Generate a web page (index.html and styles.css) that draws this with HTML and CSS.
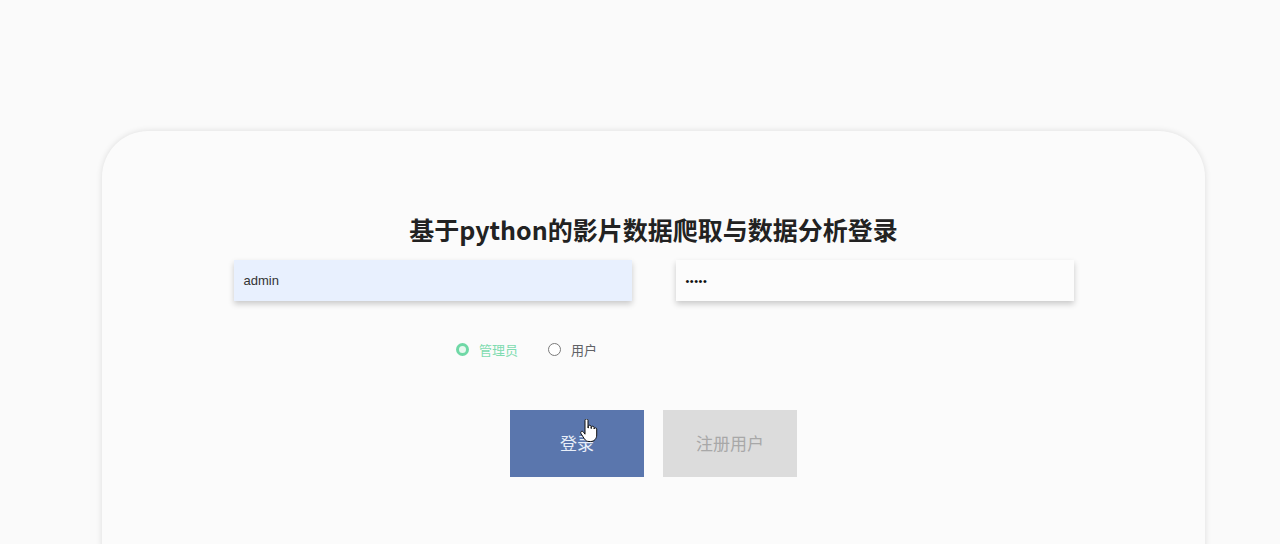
FILE: index.html
```html
<!DOCTYPE html>
<html lang="zh-CN">
<head>
<meta charset="utf-8">
<title>登录</title>
<link rel="stylesheet" href="styles.css">
</head>
<body>
<div class="card">
  <h1 class="title">基于python的影片数据爬取与数据分析登录</h1>
  <div class="inputs">
    <div class="field filled">admin</div>
    <div class="field pwd">•••••</div>
  </div>
  <div class="radios">
    <label class="radio on"><span class="dot"></span>管理员</label>
    <label class="radio"><span class="dot"></span>用户</label>
  </div>
  <div class="buttons">
    <div class="btn primary">登录</div>
    <div class="btn secondary">注册用户</div>
  </div>
</div>
<svg class="cursor" width="18" height="24" viewBox="0 0 18 24">
  <path d="M5 1.5c0-.8.6-1.5 1.5-1.5S8 .7 8 1.5V9h.3V7.6c0-.8.6-1.4 1.4-1.4s1.4.6 1.4 1.4V9.5h.2V8.6c0-.8.6-1.4 1.4-1.4s1.4.6 1.4 1.4v1.4c0-.7.6-1.2 1.300-1.2s1.3.6 1.3 1.3V16c0 3.5-2.4 6.5-6 6.5H9c-2.2 0-3.4-1-4.6-2.6L1 14.6c-.5-.8-.3-1.7.4-2.1.7-.4 1.5-.2 2 .5L5 15.2z" fill="#fff" stroke="#111" stroke-width="1"/>
</svg>
</body>
</html>
```
FILE: styles.css
```css
html, body {
  margin: 0;
  padding: 0;
  background: #fafafa;
  height: 544px;
  overflow: hidden;
  font-family: "Noto Sans CJK SC", "Liberation Sans", sans-serif;
}
.card {
  box-sizing: border-box;
  margin: 131px 0 0 102px;
  width: 1103px;
  height: 460px;
  border-radius: 46px;
  background: #fbfbfb;
  box-shadow: 0 0 6px rgba(0, 0, 0, 0.12);
  padding-top: 80px;
  display: flex;
  flex-direction: column;
  align-items: center;
}
.title {
  margin: 0;
  font-size: 25px;
  line-height: 36px;
  font-weight: 700;
  color: #222;
}
.inputs {
  display: flex;
  gap: 44px;
  margin-top: 13px;
}
.field {
  box-sizing: border-box;
  width: 398px;
  height: 41px;
  padding-left: 10px;
  display: flex;
  align-items: center;
  font-family: "Liberation Sans", sans-serif;
  font-size: 13px;
  color: #333;
  background: #fcfcfc;
  box-shadow: 0 3px 6px rgba(0, 0, 0, 0.2);
}
.field.filled {
  background: #e8f0fe;
}
.field.pwd {
  font-size: 11px;
  letter-spacing: 0.5px;
  color: #111;
}
.radios {
  align-self: flex-start;
  margin-left: 354px;
  margin-top: 37px;
  display: flex;
  gap: 30px;
  height: 22px;
  align-items: center;
}
.radio {
  display: flex;
  align-items: center;
  gap: 10px;
  font-size: 13px;
  color: #606266;
}
.radio .dot {
  box-sizing: border-box;
  width: 13px;
  height: 13px;
  border-radius: 50%;
  border: 1px solid #7a7a7a;
  background: #fff;
}
.radio.on {
  color: #7fdcb0;
}
.radio.on .dot {
  border: 3.5px solid #6fd8a6;
  background: #e7f8ef;
}
.buttons {
  display: flex;
  gap: 19px;
  margin-top: 50px;
}
.btn {
  width: 134px;
  height: 67px;
  display: flex;
  align-items: center;
  justify-content: center;
  font-size: 17px;
  padding-bottom: 3px;
  box-sizing: border-box;
}
.btn.primary {
  background: #5a76ad;
  color: #e8eef8;
}
.btn.secondary {
  background: #dcdcdc;
  color: #a8a8a8;
}
.cursor {
  position: absolute;
  left: 580px;
  top: 419px;
}
```
